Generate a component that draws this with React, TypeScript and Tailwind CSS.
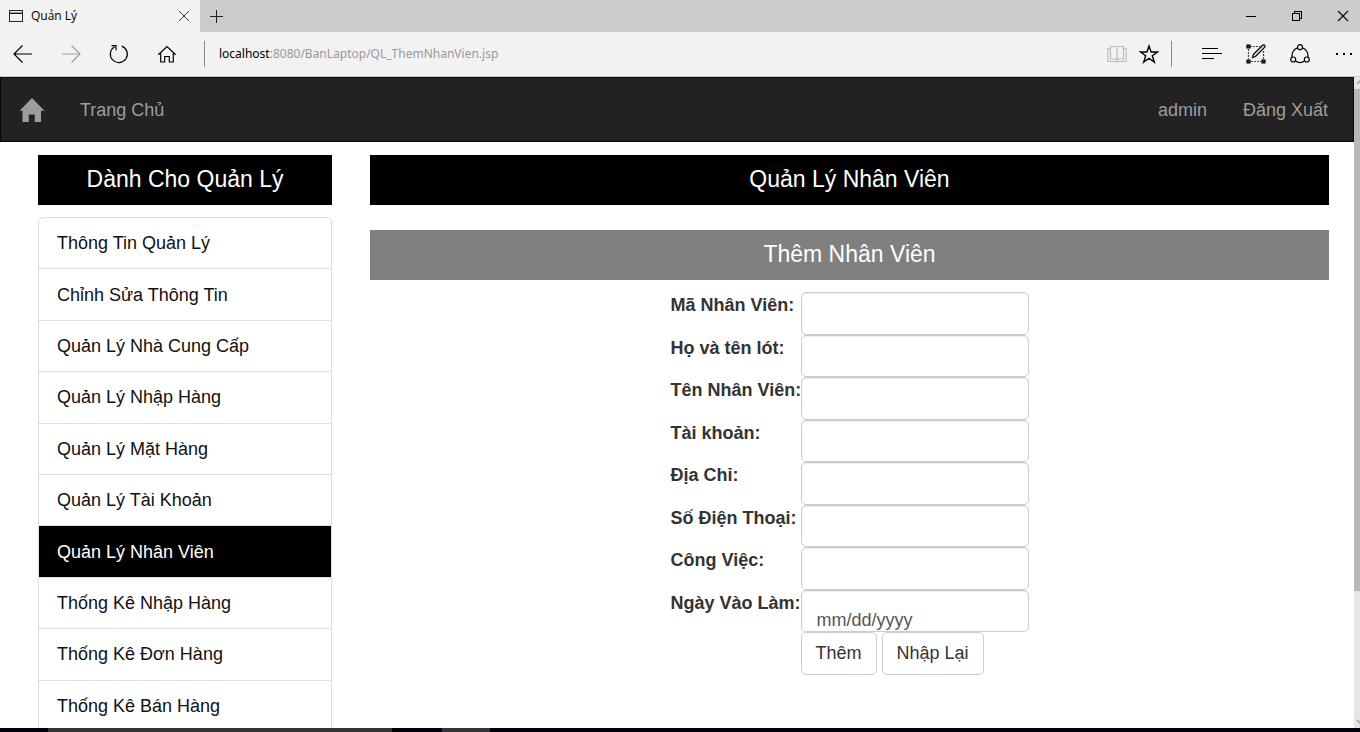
import type { ReactNode } from "react";

const menuItems = [
  "Thông Tin Quản Lý",
  "Chỉnh Sửa Thông Tin",
  "Quản Lý Nhà Cung Cấp",
  "Quản Lý Nhập Hàng",
  "Quản Lý Mặt Hàng",
  "Quản Lý Tài Khoản",
  "Quản Lý Nhân Viên",
  "Thống Kê Nhập Hàng",
  "Thống Kê Đơn Hàng",
  "Thống Kê Bán Hàng",
];
const activeItem = "Quản Lý Nhân Viên";

const fields = [
  { id: "ma", label: "Mã Nhân Viên:", type: "text" },
  { id: "ho", label: "Họ và tên lót:", type: "text" },
  { id: "ten", label: "Tên Nhân Viên:", type: "text" },
  { id: "taikhoan", label: "Tài khoản:", type: "text" },
  { id: "diachi", label: "Địa Chỉ:", type: "text" },
  { id: "sdt", label: "Số Điện Thoại:", type: "text" },
  { id: "congviec", label: "Công Việc:", type: "text" },
  { id: "ngayvaolam", label: "Ngày Vào Làm:", type: "date" },
];

function IconButton({ label, children, className = "" }: { label: string; children: ReactNode; className?: string }) {
  return (
    <button type="button" aria-label={label} className={`shrink-0 ${className}`}>
      <svg width="20" height="20" viewBox="0 0 20 20" fill="none" stroke="currentColor" strokeWidth="1.2">
        {children}
      </svg>
    </button>
  );
}

function TitleBar() {
  return (
    <div className="flex h-8 shrink-0 items-center bg-[#cccccc]">
      <div className="flex h-full w-[200px] items-center bg-[#f2f2f2] pr-2 pl-2">
        <svg width="16" height="14" viewBox="0 0 16 14" fill="none" stroke="#222" shapeRendering="crispEdges">
          <path d="M1.5 1.5h13v11h-13z" />
          <path d="M2 4.5h12" />
          <path d="M2 3.5h12" stroke="#999" />
        </svg>
        <span className="ml-[7px] flex-1 text-xs">Quản Lý</span>
        <button type="button" aria-label="Close tab">
          <svg width="16" height="16" viewBox="0 0 16 16" fill="none" stroke="#333">
            <path d="M3 3l10 10M13 3L3 13" />
          </svg>
        </button>
      </div>
      <button type="button" aria-label="New tab" className="ml-2">
        <svg width="16" height="16" viewBox="0 0 16 16" fill="none" stroke="#222" shapeRendering="crispEdges">
          <path d="M2 8.5h13M8.5 2v13" />
        </svg>
      </button>
      <div className="ml-auto flex items-center gap-[30px] pr-[9px] text-black">
        <button type="button" aria-label="Minimize">
          <svg width="16" height="16" viewBox="0 0 16 16" fill="none" stroke="currentColor" shapeRendering="crispEdges">
            <path d="M3 8.5h10" />
          </svg>
        </button>
        <button type="button" aria-label="Restore">
          <svg width="16" height="16" viewBox="0 0 16 16" fill="none" stroke="currentColor" shapeRendering="crispEdges">
            <path d="M3.5 5.500h7v7h-7zM5.500 5V3.500h7v7H11" />
          </svg>
        </button>
        <button type="button" aria-label="Close">
          <svg width="16" height="16" viewBox="0 0 16 16" fill="none" stroke="currentColor" strokeWidth="1.1">
            <path d="M3 3l10 10M13 3L3 13" />
          </svg>
        </button>
      </div>
    </div>
  );
}

function Toolbar() {
  return (
    <div className="flex h-[45px] shrink-0 items-center border-b border-[#cccccc] bg-[#f2f2f2] pr-[6px] pl-[13px] text-black">
      <div className="flex gap-7">
        <IconButton label="Back">
          <path d="M9.500 1.500L1 10l8.500 8.500M1 10h18" />
        </IconButton>
        <IconButton label="Forward" className="text-[#a0a0a0]">
          <path d="M10.500 1.500L19 10l-8.500 8.500M19 10H1" />
        </IconButton>
        <IconButton label="Refresh">
          <path d="M12.800 2.100A8.500 8.500 0 1 1 5.600 2.700M2.500 1.700h4.500v4.500" />
        </IconButton>
        <IconButton label="Home">
          <path d="M1.300 10.800L10 2.500l8.700 8.300M3.700 9v9h4v-5.500h4.600V18h4V9" />
        </IconButton>
      </div>
      <div className="ml-[27px] h-[26px] w-px bg-[#888888]" />
      <div className="ml-[14px] min-w-0 flex-1 font-['Noto_Sans',sans-serif] text-xs text-[#999999]">
        <span className="text-black">localhost</span>:8080/BanLaptop/QL_ThemNhanVien.jsp
      </div>
      <div className="flex items-center gap-3">
        <IconButton label="Reading view" className="text-[#bcbcbc]">
          <path d="M3.500 2.500h4.500q2 0 2 2q0-2 2-2h4.500V15h-4.500q-2 0-2 1.500q0-1.500-2-1.500H3.500zM10 4v13M3.500 4.500H.8v13H9l1 .8 1-.8h8.200v-13h-2.700" />
        </IconButton>
        <IconButton label="Add to favorites">
          <path d="M10 2l2.100 6h6.400l-5.200 3.800 2 6.300L10 14.300l-5.300 3.800 2-6.300L1.500 8h6.400z" strokeWidth="1.400" />
        </IconButton>
        <div className="h-[26px] w-px bg-[#888888]" />
      </div>
      <div className="ml-[30px] flex items-center gap-6">
        <IconButton label="Hub">
          <path d="M0 4.500h16M0 9.500h20M0 14.500h12" shapeRendering="crispEdges" />
        </IconButton>
        <IconButton label="Web note">
          <path d="M4 2.500h10M2.500 5v10M5 17.500h10M17.500 7v8" strokeDasharray="2 1" stroke="#444" />
          <path d="M1 1h3v3H1zM1 16h3v3H1zM16 16h3v3h-3z" fill="#333" />
          <path d="M6.500 13.500l1-3.200 9.300-9.300q1-.5 1.800.2t.2 1.900l-9.300 9.400z" fill="#ddd" />
        </IconButton>
        <IconButton label="Share">
          <circle cx="10" cy="3.200" r="2.500" />
          <circle cx="3.200" cy="15.500" r="2.500" />
          <circle cx="16.800" cy="15.500" r="2.500" />
          <path d="M7.500 3.900A8 8 0 0 0 2.200 13.200M12.500 3.900a8 8 0 0 1 5.300 9.300M5.400 17a8 8 0 0 0 9.200 0" />
        </IconButton>
        <IconButton label="More">
          <path d="M2 9h2v2H2zM9 9h2v2H9zM16 9h2v2h-2z" fill="currentColor" stroke="none" />
        </IconButton>
      </div>
    </div>
  );
}

function Navbar() {
  return (
    <nav className="flex h-[65px] items-center border border-[#080808] bg-[#222222] pr-[25px] pl-[18px] text-lg text-[#9d9d9d]">
      <a href="#home" aria-label="Trang Chủ">
        <svg width="26" height="26" viewBox="0 0 26 26" fill="currentColor">
          <path d="M13 1L.5 13.800h3V25h6.300v-7.500h6V25h6.200V13.800h3.500z" />
        </svg>
      </a>
      <a href="#trang-chu" className="ml-[35px]">Trang Chủ</a>
      <div className="ml-auto flex gap-9">
        <a href="#admin">admin</a>
        <a href="#dang-xuat">Đăng Xuất</a>
      </div>
    </nav>
  );
}

function Sidebar() {
  return (
    <aside className="w-[294px] shrink-0">
      <h2 className="bg-black pt-2 pb-2.5 text-center text-[23px] leading-8 text-white">Dành Cho Quản Lý</h2>
      <ul className="mt-3 grid h-[516px] auto-rows-fr divide-y divide-[#dddddd] rounded-t-[5px] border border-[#dddddd]">
        {menuItems.map((item) => (
          <li key={item} className="grid">
            <a
              href="#menu"
              className={`flex items-center px-[18px] text-lg ${item === activeItem ? "bg-black text-white" : "text-[#111111]"}`}
            >
              {item}
            </a>
          </li>
        ))}
      </ul>
    </aside>
  );
}

function EmployeeForm() {
  return (
    <form className="mx-auto mt-3 w-[358px] text-lg text-[#333333]">
      <div className="grid h-[340px] auto-rows-fr grid-cols-1">
        {fields.map((field) => (
          <div key={field.id} className="flex">
            <label htmlFor={field.id} className="w-[130px] shrink-0 leading-[26px] font-bold whitespace-nowrap">
              {field.label}
            </label>
            <input
              id={field.id}
              type={field.type}
              className="h-full min-w-0 flex-1 rounded-[5px] border border-[#cccccc] bg-white px-[15px] pt-[18px] text-lg leading-5 text-[#555555] shadow-[inset_0_1px_1px_rgba(0,0,0,0.075)] [&::-webkit-calendar-picker-indicator]:hidden [&::-webkit-datetime-edit-day-field]:p-0 [&::-webkit-datetime-edit-month-field]:p-0 [&::-webkit-datetime-edit-year-field]:p-0"
            />
          </div>
        ))}
      </div>
      <div className="ml-[130px] flex gap-[5px]">
        <button type="submit" className="h-[43px] rounded-[5px] border border-[#cccccc] bg-white px-[14px] pb-0.5">
          Thêm
        </button>
        <button type="reset" className="h-[43px] rounded-[5px] border border-[#cccccc] bg-white px-[14px] pb-0.5">
          Nhập Lại
        </button>
      </div>
    </form>
  );
}

function Scrollbar() {
  return (
    <div className="flex w-[6px] shrink-0 flex-col overflow-hidden bg-[#e6e6e6]">
      <svg width="6" height="12" viewBox="0 0 6 12" fill="none" stroke="#999" className="shrink-0">
        <path d="M3 7l4-4" strokeWidth="1.500" />
      </svg>
      <div className="grow-[502] bg-[#b8b8b8]" />
      <div className="grow-[125]" />
      <svg width="6" height="12" viewBox="0 0 6 12" fill="none" stroke="#999" className="shrink-0">
        <path d="M3 4l4 4" strokeWidth="1.500" />
      </svg>
    </div>
  );
}

export default function App() {
  return (
    <div className="flex h-screen flex-col overflow-hidden bg-white font-['Open_Sans',sans-serif] text-black">
      <TitleBar />
      <Toolbar />
      <div className="flex min-h-0 flex-1">
        <div className="min-w-0 flex-1 overflow-hidden font-['Liberation_Sans',Arial,sans-serif]">
          <Navbar />
          <div className="flex gap-[38px] pt-[13px] pr-[25px] pl-[38px]">
            <Sidebar />
            <main className="min-w-0 flex-1">
              <h1 className="bg-black pt-2 pb-2.5 text-center text-[23px] leading-8 text-white">Quản Lý Nhân Viên</h1>
              <h2 className="mt-[25px] bg-[#808080] pt-2 pb-2.5 text-center text-[23px] leading-8 text-white">Thêm Nhân Viên</h2>
              <EmployeeForm />
            </main>
          </div>
        </div>
        <Scrollbar />
      </div>
      <div className="flex h-1 shrink-0 bg-[#02020a]">
        <div className="ml-12 w-[344px] bg-[#333333]" />
        <div className="ml-[50px] w-12 bg-[#33333a]" />
      </div>
    </div>
  );
}
